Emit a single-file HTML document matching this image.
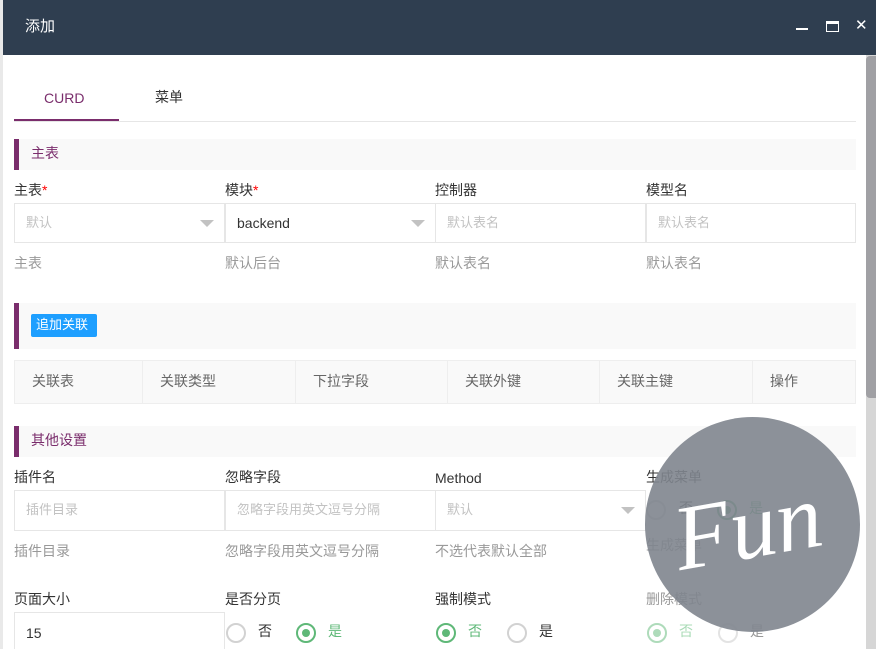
<!DOCTYPE html>
<html><head><meta charset="utf-8"><style>
*{margin:0;padding:0;box-sizing:border-box}
html{width:876px;height:649px;overflow:hidden}
body{width:876px;height:649px;overflow:hidden;background:#e9e9e9;font-family:"Liberation Sans","Noto Sans CJK SC",sans-serif;font-size:14px;line-height:1.2;color:#333;position:relative}
.a{position:absolute;white-space:nowrap}
.dlg{position:absolute;left:3px;top:0;width:873px;height:649px;background:#fff}
.hd{position:absolute;left:3px;top:0;width:873px;height:55px;background:#2f3e50;color:#fff}
.sec{position:absolute;left:14px;width:842px;background:#f9f9f9;border-left:5px solid #7a2d6c}
.sec span{position:absolute;left:12px;color:#7a2d6c;font-size:14px}
.lab{position:absolute;font-size:14px;color:#333}
.lab i{color:#f00;font-style:normal}
.inp{position:absolute;height:40px;width:211px;border:1px solid #e6e6e6;background:#fff}
.inp span{position:absolute;left:11px;top:11px;font-size:13px;color:#c2c2c2}
.help{position:absolute;color:#999;font-size:14px}
.tri{position:absolute;right:10px;top:16px;width:0;height:0;border-left:7px solid transparent;border-right:7px solid transparent;border-top:7px solid #c2c2c2}
.rad{position:absolute;width:20px;height:20px;border-radius:50%;border:2px solid #d2d2d2;background:#fff}
.rad.on{border-color:#5fb878}
.rad.on:after{content:"";position:absolute;left:4px;top:4px;width:8px;height:8px;border-radius:50%;background:#5fb878}
.th{position:absolute;top:360px;height:44px;border:1px solid #eee;background:#f9f9f9;color:#666}
.th span{position:absolute;left:17px;top:12px}
</style></head><body>
<div class="dlg"></div>
<div class="hd"><span class="a" style="left:22px;top:18px;font-size:15px">添加</span>
<div class="a" style="left:793px;top:28px;width:12px;height:2px;background:#fff"></div>
<div class="a" style="left:823px;top:21px;width:13px;height:11px;border:1.5px solid #fff;border-top-width:3px"></div>
<span class="a" style="left:852px;top:17px;font-size:15px">✕</span></div>

<span class="a" style="left:44px;top:90px;color:#7a2d6c;font-size:14px">CURD</span>
<span class="a" style="left:155px;top:89px;font-size:14px">菜单</span>
<div class="a" style="left:14px;top:121px;width:842px;height:1px;background:#e6e6e6"></div>
<div class="a" style="left:14px;top:119px;width:105px;height:2px;background:#7a2d6c"></div>

<div class="sec" style="top:139px;height:31px"><span style="top:6px">主表</span></div>
<div class="lab" style="left:14px;top:182px">主表<i>*</i></div>
<div class="lab" style="left:225px;top:182px">模块<i>*</i></div>
<div class="lab" style="left:435px;top:182px">控制器</div>
<div class="lab" style="left:646px;top:182px">模型名</div>
<div class="inp" style="left:14px;top:203px"><span>默认</span><div class="tri"></div></div>
<div class="inp" style="left:225px;top:203px"><span style="color:#333;font-size:14px">backend</span><div class="tri"></div></div>
<div class="inp" style="left:435px;top:203px"><span>默认表名</span></div>
<div class="inp" style="left:646px;top:203px;width:210px"><span>默认表名</span></div>
<div class="help" style="left:14px;top:255px">主表</div>
<div class="help" style="left:225px;top:255px">默认后台</div>
<div class="help" style="left:435px;top:255px">默认表名</div>
<div class="help" style="left:646px;top:255px">默认表名</div>

<div class="sec" style="top:303px;height:46px"><div class="a" style="left:12px;top:11px;width:66px;height:23px;background:#1e9fff;border-radius:2px;color:#fff;font-size:13px;padding:3px 0 0 5px">追加关联</div></div>
<div class="th" style="left:14px;width:129px"><span>关联表</span></div>
<div class="th" style="left:142px;width:154px"><span>关联类型</span></div>
<div class="th" style="left:295px;width:153px"><span>下拉字段</span></div>
<div class="th" style="left:447px;width:153px"><span>关联外键</span></div>
<div class="th" style="left:599px;width:154px"><span>关联主键</span></div>
<div class="th" style="left:752px;width:104px"><span>操作</span></div>

<div class="sec" style="top:426px;height:31px"><span style="top:6px">其他设置</span></div>
<div class="lab" style="left:14px;top:469px">插件名</div>
<div class="lab" style="left:225px;top:469px">忽略字段</div>
<div class="lab" style="left:435px;top:470px">Method</div>
<div class="lab" style="left:646px;top:469px">生成菜单</div>
<div class="inp" style="left:14px;top:490px;height:41px"><span>插件目录</span></div>
<div class="inp" style="left:225px;top:490px;height:41px"><span>忽略字段用英文逗号分隔</span></div>
<div class="inp" style="left:435px;top:490px;height:41px"><span>默认</span><div class="tri"></div></div>
<div class="rad" style="left:646px;top:500px"></div><span class="a" style="left:679px;top:500px">否</span>
<div class="rad on" style="left:717px;top:500px"></div><span class="a" style="left:749px;top:500px;color:#5fb878">是</span>
<div class="help" style="left:14px;top:543px">插件目录</div>
<div class="help" style="left:225px;top:543px">忽略字段用英文逗号分隔</div>
<div class="help" style="left:435px;top:543px">不选代表默认全部</div>
<div class="help" style="left:646px;top:537px">生成菜单</div>

<div class="lab" style="left:14px;top:591px">页面大小</div>
<div class="lab" style="left:225px;top:591px">是否分页</div>
<div class="lab" style="left:435px;top:591px">强制模式</div>
<div class="lab" style="left:646px;top:591px;color:#999">删除模式</div>
<div class="inp" style="left:14px;top:612px;height:37px;border-bottom:none"><span style="color:#333;font-size:14px;top:12px">15</span></div>
<div class="rad" style="left:226px;top:623px"></div><span class="a" style="left:258px;top:623px">否</span>
<div class="rad on" style="left:296px;top:623px"></div><span class="a" style="left:328px;top:623px;color:#5fb878">是</span>
<div class="rad on" style="left:436px;top:623px"></div><span class="a" style="left:468px;top:623px;color:#5fb878">否</span>
<div class="rad" style="left:507px;top:623px"></div><span class="a" style="left:539px;top:623px">是</span>
<div class="rad on" style="left:647px;top:623px;opacity:.5"></div><span class="a" style="left:679px;top:623px;color:#a9dbb6">否</span>
<div class="rad" style="left:718px;top:623px;opacity:.6"></div><span class="a" style="left:750px;top:623px;color:#999">是</span>

<div class="a" style="left:866px;top:55px;width:10px;height:594px;background:#d6d6d6"></div>
<div class="a" style="left:866px;top:56px;width:10px;height:342px;background:#a0a0a4;border-radius:4px 0 0 4px"></div>

<svg class="a" style="left:645px;top:417px" width="215" height="215"><circle cx="107.5" cy="107.5" r="107.5" fill="#80858e" opacity=".9"/>
<text x="28" y="140" font-family="Liberation Serif" font-style="italic" font-size="92" fill="#fff" transform="rotate(-10 107 107)">Fun</text></svg>
</body></html>
